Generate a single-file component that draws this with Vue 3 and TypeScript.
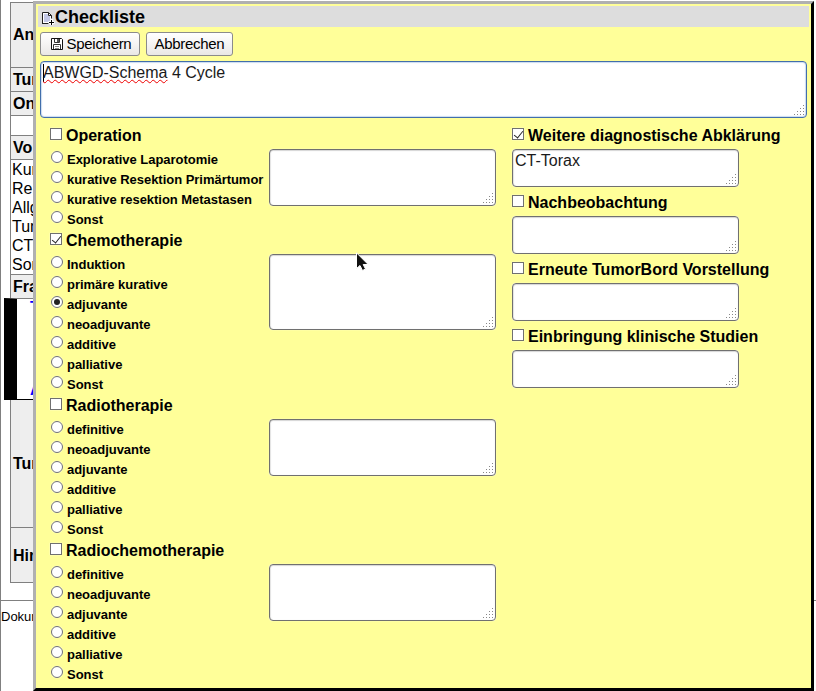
<script setup lang="ts">
import { reactive, ref } from 'vue'

interface Therapy {
  title: string
  checked: boolean
  choice: string
  options: string[]
  note: string
}

interface Measure {
  title: string
  checked: boolean
  note: string
}

const therapies = reactive<Therapy[]>([
  {
    title: 'Operation',
    checked: false,
    choice: '',
    options: ['Explorative Laparotomie', 'kurative Resektion Primärtumor', 'kurative resektion Metastasen', 'Sonst'],
    note: '',
  },
  {
    title: 'Chemotherapie',
    checked: true,
    choice: 'adjuvante',
    options: ['Induktion', 'primäre kurative', 'adjuvante', 'neoadjuvante', 'additive', 'palliative', 'Sonst'],
    note: '',
  },
  {
    title: 'Radiotherapie',
    checked: false,
    choice: '',
    options: ['definitive', 'neoadjuvante', 'adjuvante', 'additive', 'palliative', 'Sonst'],
    note: '',
  },
  {
    title: 'Radiochemotherapie',
    checked: false,
    choice: '',
    options: ['definitive', 'neoadjuvante', 'adjuvante', 'additive', 'palliative', 'Sonst'],
    note: '',
  },
])

const measures = reactive<Measure[]>([
  { title: 'Weitere diagnostische Abklärung', checked: true, note: 'CT-Torax' },
  { title: 'Nachbeobachtung', checked: false, note: '' },
  { title: 'Erneute TumorBord Vorstellung', checked: false, note: '' },
  { title: 'Einbringung klinische Studien', checked: false, note: '' },
])

const findings = ref(['Kur', 'Re', 'Allg', 'Tum', 'CT', 'Son'])
const grip = [[9, 0], [6, 3], [9, 3], [3, 6], [6, 6], [9, 6], [0, 9], [3, 9], [6, 9], [9, 9]]
</script>

<template>
  <div class="page">
    <div class="sheet">
      <div class="record">
        <div class="cell head r-an">An</div>
        <div class="cell head r-line">Tum</div>
        <div class="cell head r-line">On</div>
        <div class="cell r-gap"></div>
        <div class="cell head r-line">Vo</div>
        <div class="cell r-list">
          <div v-for="f in findings" :key="f">{{ f }}</div>
        </div>
        <div class="cell head r-line">Fra</div>
        <div class="r-question">
          <span class="q-top">T</span>
          <span class="q-bottom">A</span>
        </div>
        <div class="cell head r-tu">Tum</div>
        <div class="cell head r-hin">Hin</div>
      </div>
      <div class="foot">Dokum</div>
    </div>

    <section class="dialog">
      <header class="title">
        <svg class="doc" width="13" height="14" viewBox="0 0 13 14">
          <path d="M.5 1.500h6l3 3v8h-9z" fill="#fff" />
          <path d="M2 3h4v2h2v6H2z" fill="#c3c8e6" />
          <path d="M.5 12.500v-11h6l3 3v3M0 12.500h7M6.500 1.500v3h3" fill="none" stroke="#222" />
          <path d="M9.500 8v6M6.500 11.500h6" stroke="#fff" stroke-width="3" />
          <path d="M9.500 9v5M7 11.500h5" stroke="#000" />
        </svg>
        <h1>Checkliste</h1>
      </header>

      <div class="actions">
        <button type="button" class="save">
          <svg width="12" height="12" viewBox="0 0 12 12">
            <path d="M.5.5h10l1 1v10H.5z" fill="#fff" stroke="#111" />
            <path d="M3.500 1v3.500h5V1M2.500 11V6.500h7V11" fill="#fff" stroke="#333" />
            <path d="M6 1h2v3H6z" fill="#555" />
            <path d="M4 8.500h4M4 10.500h4" stroke="#888" />
          </svg>
          <span>Speichern</span>
        </button>
        <button type="button" class="cancel"><span>Abbrechen</span></button>
      </div>

      <div class="field main">
        <div class="entry" role="textbox"><i class="caret"></i><span class="misspelt">ABWGD-Schema</span> 4 Cycle</div>
        <svg class="grip" width="10" height="10"><rect v-for="(p, i) in grip" :key="i" :x="p[0]" :y="p[1]" width="1" height="1" /></svg>
      </div>

      <div class="columns">
        <div class="left">
          <div v-for="t in therapies" :key="t.title" class="group">
            <label class="heading"><input v-model="t.checked" type="checkbox" /><span>{{ t.title }}</span></label>
            <div class="body">
              <div class="options">
                <label v-for="o in t.options" :key="o" class="option">
                  <input v-model="t.choice" type="radio" :name="t.title" :value="o" /><span>{{ o }}</span>
                </label>
              </div>
              <div class="field" :class="{ tall: t.options.length > 6 }">
                <textarea v-model="t.note"></textarea>
                <svg class="grip" width="10" height="10"><rect v-for="(p, i) in grip" :key="i" :x="p[0]" :y="p[1]" width="1" height="1" /></svg>
              </div>
            </div>
          </div>
        </div>

        <div class="right">
          <div v-for="m in measures" :key="m.title" class="measure">
            <label class="heading"><input v-model="m.checked" type="checkbox" /><span>{{ m.title }}</span></label>
            <div class="field small">
              <textarea v-model="m.note"></textarea>
              <svg class="grip" width="10" height="10"><rect v-for="(p, i) in grip" :key="i" :x="p[0]" :y="p[1]" width="1" height="1" /></svg>
            </div>
          </div>
        </div>
      </div>
    </section>

    <svg class="pointer" width="14" height="20" viewBox="0 0 14 20">
      <path d="M.5.8v15.700l3.500-3 2.500 5 3-1.500-2.300-4.500h5z" fill="#111" stroke="#fff" />
    </svg>
  </div>
</template>

<style>
body {
  margin: 0;
  background: #fff;
  overflow: hidden;
}
</style>

<style scoped>
.page {
  position: relative;
  width: 816px;
  height: 691px;
  overflow: hidden;
  font-family: "Liberation Sans", Arial, sans-serif;
  font-size: 16px;
  color: #000;
}
.page * {
  box-sizing: border-box;
}
.sheet {
  height: 691px;
  border-left: 1px solid #808080;
  padding-top: 2px;
}
.record {
  margin-left: 9px;
  width: 120px;
  border-left: 1px solid #808080;
  border-bottom: 1px solid #808080;
}
.cell {
  border-top: 1px solid #808080;
  padding-left: 2px;
  display: flex;
  align-items: center;
}
.head {
  background: #eee;
  font-weight: bold;
}
.r-an { height: 65px; }
.r-line { height: 24px; }
.r-gap { height: 20px; }
.r-list {
  height: 115px;
  display: block;
  padding-left: 1px;
  line-height: 19px;
}
.r-question {
  height: 102px;
  margin-left: -7px;
  border-left: 13px solid #000;
  border-top: 1px solid #808080;
  border-bottom: 1px solid #000;
  display: flex;
  flex-direction: column;
  justify-content: space-between;
  padding-left: 13px;
  color: #00f;
  font-weight: bold;
  line-height: 18px;
}
.r-tu { height: 127px; border-top: 0; }
.r-hin { height: 55px; padding-top: 2px; }
.foot {
  margin-top: 17px;
  border-top: 1px solid #808080;
  padding-top: 8px;
  font-size: 13px;
  line-height: 16px;
}
.dialog {
  position: absolute;
  left: 33px;
  top: 1px;
  width: 781px;
  height: 690px;
  border: 3px solid;
  border-color: #b0b0b0 #000 #000 #b0b0b0;
  background: #ff9;
  padding: 2px;
}
.title {
  height: 21px;
  background: #ddd;
  display: flex;
  align-items: center;
  padding-left: 4px;
}
.doc {
  margin-top: 3px;
}
h1 {
  margin: 0;
  padding-top: 1px;
  font-size: 18px;
  line-height: 20px;
}
.actions {
  display: flex;
  gap: 6px;
  margin: 5px 0 0 2px;
}
button {
  height: 24px;
  border: 1px solid #8b8b8b;
  border-radius: 3px;
  background: linear-gradient(#fff, #f5f4f3 50%, #e9e7e5);
  padding: 0;
  display: flex;
  align-items: center;
  justify-content: center;
  font: 15px/22px "Liberation Sans", Arial, sans-serif;
  letter-spacing: -0.3px;
  color: #000;
}
.save { width: 100px; gap: 4px; padding-left: 2px; }
.cancel { width: 87px; }
.field {
  position: relative;
  width: 227px;
  height: 57px;
  border: 1px solid #707070;
  border-radius: 4px;
  background: #fff;
  box-shadow: inset 0 1px 1px #d5d5d5, inset 1px 0 1px #e5e5e5, 0 0 1px #fff;
}
.tall { height: 76px; }
.small { height: 38px; }
.main {
  width: 767px;
  height: 57px;
  margin: 5px 0 0 2px;
  border-color: #426eab;
  box-shadow: inset 0 0 1px 1px #cbdcf0;
}
.entry, textarea {
  display: block;
  width: 100%;
  height: 100%;
  border: 0;
  outline: 0;
  margin: 0;
  padding: 2px;
  background: transparent;
  resize: none;
  overflow: hidden;
  font: 16px/18px "Liberation Sans", Arial, sans-serif;
  color: #1a1a1a;
}
.caret {
  display: inline-block;
  width: 1px;
  height: 18px;
  margin-right: -1px;
  background: #000;
  vertical-align: top;
}
.misspelt {
  text-decoration: underline wavy #e00 1px;
  text-underline-offset: 1px;
  text-decoration-skip-ink: none;
}
.grip {
  position: absolute;
  right: 2px;
  bottom: 2px;
  fill: #888;
}
.columns {
  display: flex;
  padding: 6px 0 0 12px;
}
.left { width: 462px; }
.heading {
  display: flex;
  height: 25px;
  font-weight: bold;
  line-height: 24px;
}
input {
  appearance: none;
  flex: none;
  background: #fff;
  border: 1px solid #707070;
  box-shadow: 0 0 1px #fff;
}
input[type="checkbox"] {
  width: 12px;
  height: 12px;
  margin: 4px 4px 0 0;
}
input[type="checkbox"]:checked::before {
  content: "";
  display: block;
  width: 4px;
  height: 8px;
  margin: 0 0 0 3px;
  border: solid #222;
  border-width: 0 1.5px 1.5px 0;
  transform: rotate(38deg);
}
input[type="radio"] {
  width: 12px;
  height: 12px;
  border-radius: 50%;
  margin: 2px 4px 0 1px;
}
input[type="radio"]:checked::before {
  content: "";
  display: block;
  width: 6px;
  height: 6px;
  margin: 2px;
  border-radius: 50%;
  background: #222;
}
.body { display: flex; }
.options { width: 219px; }
.option {
  display: flex;
  height: 20px;
  font-size: 13px;
  font-weight: bold;
  line-height: 21px;
  letter-spacing: -0.03px;
  white-space: nowrap;
}
.right { flex: 1; }
.right .heading span { white-space: nowrap; }
.measure { height: 67px; }
.pointer {
  position: absolute;
  left: 356px;
  top: 252px;
}
</style>
